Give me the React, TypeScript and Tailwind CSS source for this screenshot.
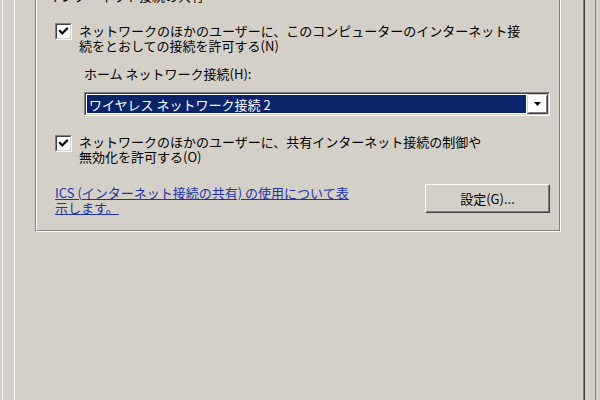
import React from 'react';

const font = { fontFamily: '"Noto Sans CJK JP", "Liberation Sans", sans-serif' };

function Check() {
  // sunken classic checkbox with a black tick
  return (
    <div className="w-[17px] h-[17px] shrink-0 border border-t-[#808080] border-l-[#808080] border-b-white border-r-white">
      <div className="w-full h-full border border-t-[#404040] border-l-[#404040] border-b-[#d4d0c8] border-r-[#d4d0c8] bg-white flex items-center justify-center">
        <svg width="11" height="11" viewBox="0 0 11 11">
          <path d="M2 5 L4.3 7.5 L9 2.5" fill="none" stroke="#000" strokeWidth="2.2" strokeLinecap="square" />
        </svg>
      </div>
    </div>
  );
}

export default function App() {
  return (
    <div className="w-[600px] h-[400px] bg-[#d4d0c8] overflow-hidden flex text-[13px] leading-[15px] text-black" style={font}>
      <div className="w-[2px] shrink-0" />
      <div className="w-px shrink-0 bg-[#f7f6f3]" />
      <div className="w-[11px] shrink-0" />

      {/* tab page */}
      <div className="w-[571px] shrink-0 border-l border-r border-l-white border-r-[#404040]">
        <div className="h-full border-r border-[#808080] pt-px">
          {/* group box */}
          <div className="relative ml-[20px] w-[526px] -mt-[4px] border border-t-[#808080] border-l-[#808080] border-b-white border-r-white">
            <span className="absolute -top-[10px] left-[10px] bg-[#d4d0c8] px-[2px] whitespace-nowrap">インターネット接続の共有</span>
            <div className="border border-t-white border-l-white border-b-[#808080] border-r-[#808080] pt-[24px] pb-[15px]">
              <div className="flex items-start pl-[18px]">
                <div><Check /></div>
                <p className="ml-[7px] whitespace-nowrap">
                  ネットワークのほかのユーザーに、このコンピューターのインターネット接<br />
                  続をとおしての接続を許可する(N)
                </p>
              </div>

              <p className="ml-[47px] mt-[13px] whitespace-nowrap">ホーム ネットワーク接続(H):</p>

              <div className="ml-[47px] mt-[11px] w-[466px] h-[24px] border border-t-[#808080] border-l-[#808080] border-b-white border-r-white">
                <div className="h-full border border-t-[#404040] border-l-[#404040] border-b-[#d4d0c8] border-r-[#d4d0c8] bg-white flex p-px">
                  <div className="flex-1 bg-[#0a246a] text-white pl-[2px] mr-[2px] flex items-center whitespace-nowrap">
                    ワイヤレス ネットワーク接続 2
                  </div>
                  <div className="w-[21px] h-[20px] -m-px border border-t-[#d4d0c8] border-l-[#d4d0c8] border-b-[#404040] border-r-[#404040]">
                    <div className="h-full border border-t-white border-l-white border-b-[#808080] border-r-[#808080] flex items-center justify-center">
                      <svg width="7" height="4" viewBox="0 0 7 4">
                        <path d="M0 0 H7 L3.5 4 Z" fill="#000" />
                      </svg>
                    </div>
                  </div>
                </div>
              </div>

              <div className="flex items-start pl-[18px] mt-[18px]">
                <div className="mt-px"><Check /></div>
                <p className="ml-[7px] whitespace-nowrap">
                  ネットワークのほかのユーザーに、共有インターネット接続の制御や<br />
                  無効化を許可する(O)
                </p>
              </div>

              <div className="flex items-start justify-between pl-[18px] pr-[9px] mt-[21px]">
                <a className="text-[#2233aa] underline whitespace-nowrap cursor-pointer">
                  ICS (インターネット接続の共有) の使用について表<br />
                  示します。
                </a>
                <button className="-mt-px w-[125px] h-[29px] border border-t-white border-l-white border-b-[#404040] border-r-[#404040]">
                  <div className="h-full border border-t-[#d4d0c8] border-l-[#d4d0c8] border-b-[#808080] border-r-[#808080] flex items-center justify-center">
                    設定(G)...
                  </div>
                </button>
              </div>
            </div>
          </div>
        </div>
      </div>

      <div className="w-[10px] shrink-0" />
      <div className="w-px shrink-0 bg-[#808080]" />
    </div>
  );
}
